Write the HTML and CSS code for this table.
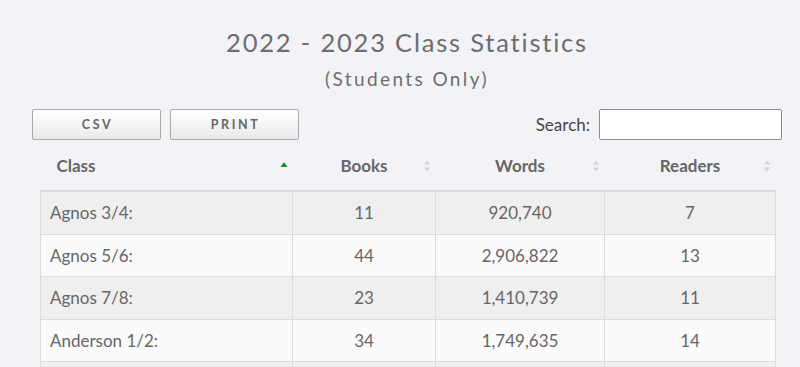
FILE: index.html
```html
<!DOCTYPE html>
<html>
<head>
<meta charset="utf-8">
<link rel="stylesheet" href="styles.css">
</head>
<body>
<div class="page">
  <h1 class="title">2022 - 2023 Class Statistics</h1>
  <h2 class="subtitle">(Students Only)</h2>
  <div class="controls">
    <div class="buttons">
      <button class="btn">CSV</button>
      <button class="btn">PRINT</button>
    </div>
    <label class="search">Search: <input type="text" class="search-input"></label>
  </div>
  <table class="stats">
    <colgroup>
      <col class="c1"><col class="c2"><col class="c3"><col class="c4">
    </colgroup>
    <thead>
      <tr>
        <th class="col-class">Class<svg class="sort" width="8" height="12" viewBox="0 0 8 12"><path d="M4 2 L7.5 7 L0.5 7 Z" fill="#1f8a2a"/></svg></th>
        <th>Books<svg class="sort" width="8" height="12" viewBox="0 0 8 12"><path d="M4 0.5 L7 4.5 L1 4.5 Z M4 11.5 L7 7.5 L1 7.5 Z" fill="#d4d4d8"/></svg></th>
        <th>Words<svg class="sort" width="8" height="12" viewBox="0 0 8 12"><path d="M4 0.5 L7 4.5 L1 4.5 Z M4 11.5 L7 7.5 L1 7.5 Z" fill="#d4d4d8"/></svg></th>
        <th>Readers<svg class="sort" width="8" height="12" viewBox="0 0 8 12"><path d="M4 0.5 L7 4.5 L1 4.5 Z M4 11.5 L7 7.5 L1 7.5 Z" fill="#d4d4d8"/></svg></th>
      </tr>
    </thead>
    <tbody>
      <tr><td>Agnos 3/4:</td><td>11</td><td>920,740</td><td>7</td></tr>
      <tr><td>Agnos 5/6:</td><td>44</td><td>2,906,822</td><td>13</td></tr>
      <tr><td>Agnos 7/8:</td><td>23</td><td>1,410,739</td><td>11</td></tr>
      <tr><td>Anderson 1/2:</td><td>34</td><td>1,749,635</td><td>14</td></tr>
      <tr><td>Anderson 3/4:</td><td>30</td><td>1,512,004</td><td>12</td></tr>
    </tbody>
  </table>
</div>
</body>
</html>
```

FILE: styles.css
```css
html, body {
  margin: 0;
  padding: 0;
  background: #f3f3f7;
  height: 367px;
  overflow: hidden;
}
body {
  font-family: Lato, "Open Sans", sans-serif;
  color: #666;
}
.page {
  padding: 27px 18px 0 32px;
}
.title {
  margin: 0;
  text-align: center;
  font-size: 25.5px;
  font-weight: 400;
  letter-spacing: 1.8px;
  line-height: 30px;
  color: #6b6e6e;
}
.subtitle {
  margin: 10px 0 0;
  text-align: center;
  font-size: 19px;
  font-weight: 400;
  letter-spacing: 2.4px;
  line-height: 24px;
  color: #6b6e6e;
}
.controls {
  margin-top: 18px;
  display: flex;
  justify-content: space-between;
  align-items: center;
  height: 31px;
}
.buttons {
  display: flex;
  gap: 9px;
}
.btn {
  width: 129px;
  height: 31px;
  border: 1px solid #a9a9a9;
  border-radius: 2px;
  background: linear-gradient(#ffffff, #e9e9e9);
  font-family: Lato, sans-serif;
  font-weight: 700;
  font-size: 12.5px;
  letter-spacing: 2.6px;
  color: #666;
  padding: 0 0 0 2px;
}
.search {
  display: flex;
  align-items: center;
  gap: 9px;
  font-size: 17px;
  color: #444;
}
.search-input {
  width: 183px;
  height: 31px;
  box-sizing: border-box;
  border: 1px solid #8e8e8e;
  border-radius: 2px;
  background: #fff;
  margin: 0;
}
.stats {
  margin: 0 7px 0 8px;
  width: 735px;
  border-collapse: collapse;
  font-size: 17px;
  table-layout: fixed;
}
.c1 { width: 252px; }
.c2 { width: 143px; }
.c3 { width: 169px; }
.c4 { width: 171px; }
.stats th {
  position: relative;
  font-weight: 700;
  color: #666;
  padding: 17px 10px 15px;
  line-height: 18px;
  text-align: center;
}
.stats th.col-class {
  text-align: left;
  padding-left: 16px;
}
.sort {
  position: absolute;
  right: 5px;
  top: 20px;
}
.stats td {
  border: 1px solid #dcdcdc;
  padding: 12px 10px 12px;
  line-height: 17.5px;
  text-align: center;
  color: #666;
}
.stats td:first-child {
  text-align: left;
  padding-left: 9px;
}
.stats tbody tr:nth-child(odd) td { background: #efefef; }
.stats tbody tr:nth-child(even) td { background: #fafafa; }
.stats tbody tr:first-child td { border-top: 2px solid #dcdcdc; }
```
